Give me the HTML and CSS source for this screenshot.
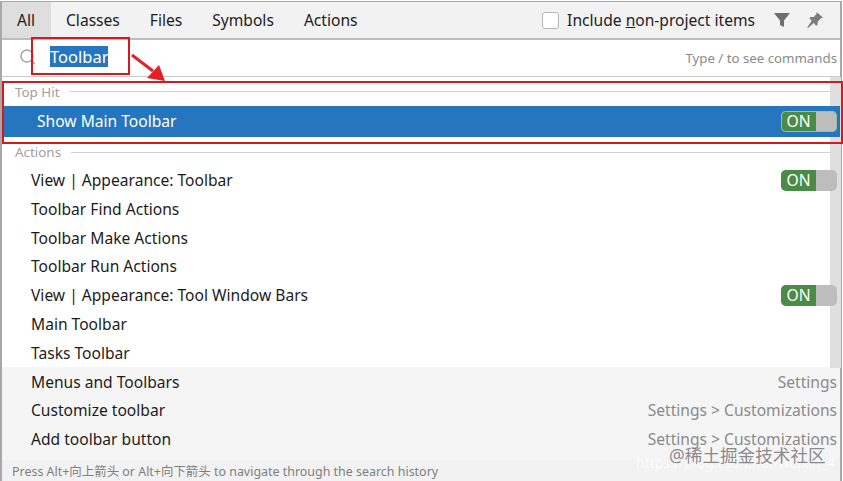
FILE: index.html
```html
<!DOCTYPE html>
<html lang="en">
<head>
<meta charset="utf-8">
<title>Search Everywhere</title>
<link rel="stylesheet" href="styles.css">
</head>
<body>
<div class="popup">
  <div class="tabs">
    <div class="tab active">All</div>
    <div class="tab">Classes</div>
    <div class="tab">Files</div>
    <div class="tab">Symbols</div>
    <div class="tab">Actions</div>
    <label class="include"><span class="check"></span><span>Include <u>n</u>on-project items</span></label>
    <svg class="tool filter" width="16" height="16" viewBox="0 0 16 16"><path d="M0 1h16L10 8.500V15L6 13V8.500z" fill="#6e6e6e"/></svg>
    <svg class="tool pin" width="18" height="18" viewBox="0 0 18 18"><path d="M10.500 1l6.500 5.500-2 .8-3.300 3.400-.2 3.300-1.300.8-2.500-2.700L2 17l-.8-.6 4.500-6.600L3.400 7.200l1-1.200 3.300-.1 2.800-2.900z" fill="#7d7d7d"/></svg>
  </div>
  <div class="search">
    <svg class="lens" width="18" height="18" viewBox="0 0 18 18"><circle cx="8" cy="8" r="6" fill="none" stroke="#a6a6a6" stroke-width="1.500"/><path d="M12.500 12.500L16 16" stroke="#a6a6a6" stroke-width="1.500"/></svg>
    <span class="query">Toolbar</span>
    <span class="hint">Type / to see commands</span>
  </div>
  <div class="results">
    <div class="group top"><span>Top Hit</span><i></i></div>
    <div class="row selected"><span class="name">Show Main Toolbar</span><span class="toggle"><b>ON</b></span></div>
    <div class="group actions"><span>Actions</span><i></i></div>
    <div class="row"><span class="name">View | Appearance: Toolbar</span><span class="toggle"><b>ON</b></span></div>
    <div class="row"><span class="name">Toolbar Find Actions</span></div>
    <div class="row"><span class="name">Toolbar Make Actions</span></div>
    <div class="row"><span class="name">Toolbar Run Actions</span></div>
    <div class="row"><span class="name">View | Appearance: Tool Window Bars</span><span class="toggle"><b>ON</b></span></div>
    <div class="row"><span class="name">Main Toolbar</span></div>
    <div class="row"><span class="name">Tasks Toolbar</span></div>
    <div class="settings">
      <div class="row"><span class="name">Menus and Toolbars</span><span class="path">Settings</span></div>
      <div class="row"><span class="name">Customize toolbar</span><span class="path">Settings &gt; Customizations</span></div>
      <div class="row"><span class="name">Add toolbar button</span><span class="path">Settings &gt; Customizations</span></div>
    </div>
  </div>
  <div class="footer">Press Alt+向上箭头 or Alt+向下箭头 to navigate through the search history</div>
  <div class="scrollbar"></div>
</div>
<div class="mark box-query"></div>
<div class="mark box-hit"></div>
<svg class="arrow" width="48" height="36" viewBox="0 0 48 36"><path d="M1 1L22 17" stroke="#e0202a" stroke-width="3"/><path d="M34 27L16 24L28 11z" fill="#e0202a"/></svg>
<div class="watermark"><span class="wm-url">https://blog.csdn.net/weixin_4</span><span class="wm-cn">@稀土掘金技术社区</span></div>
</body>
</html>
```
FILE: styles.css
```css
* { box-sizing: border-box; }
html, body { margin: 0; padding: 0; }
body {
  width: 843px;
  height: 481px;
  overflow: hidden;
  background: #fff;
  font-family: "Noto Sans", "Noto Sans CJK SC", sans-serif;
  color: #1c1c1c;
  position: relative;
}
.popup {
  width: 842px;
  height: 480px;
  margin-top: 1px;
  border: solid #a8a8a8;
  border-width: 1px 2px 0 2px;
  display: flex;
  flex-direction: column;
  position: relative;
}
.tabs {
  height: 38px;
  flex: none;
  display: flex;
  align-items: stretch;
  background: #f2f2f2;
  border-bottom: 2px solid #bdbdbd;
  font-size: 15.6px;
}
.tab { display: flex; align-items: center; padding: 0 15px; }
.tab.active { background: #dedede; width: 49px; }
.include { margin-left: auto; display: flex; align-items: center; gap: 8px; color: #222; }
.check {
  width: 17px; height: 17px;
  background: #fff;
  border: 1px solid #b5b5b5;
  border-radius: 3px;
}
.tool { align-self: center; flex: none; }
.filter { margin-left: 19px; }
.pin { margin: 0 16px 0 16px; }
.search {
  height: 37px;
  flex: none;
  display: flex;
  align-items: center;
  padding-left: 17px;
  padding-right: 3px;
  border-bottom: 1px solid #cbcbcb;
}
.lens { flex: none; margin-bottom: 2px; }
.query {
  margin-left: 13px;
  margin-bottom: 4px;
  background: #2675bf;
  color: #fff;
  font-size: 16.5px;
  line-height: 21px;
  height: 21px;
}
.hint { margin-left: auto; font-size: 13.25px; color: #8a8a8a; }
.results { flex: 1; display: flex; flex-direction: column; }
.group {
  display: flex;
  align-items: center;
  padding-left: 13px;
  padding-right: 9px;
  font-size: 13.4px;
  color: #a0a0a0;
  gap: 10px;
}
.group i { flex: 1; height: 1px; background: #cfcfcf; }
.group.top { height: 29px; }
.group.actions { height: 30px; }
.row {
  height: 28.8px;
  flex: none;
  display: flex;
  align-items: center;
  justify-content: space-between;
  padding-left: 29px;
  padding-right: 3px;
  font-size: 15.6px;
}
.row.selected {
  height: 31px;
  background: #2675bf;
  color: #fff;
  padding-left: 35px;
  position: relative;
  z-index: 1;
}
.selected .name { margin-bottom: 2px; }
.group.actions + .row { margin-top: -1.4px; }
.toggle {
  width: 56px;
  height: 21px;
  flex: none;
  display: block;
  background: #bdbdbd;
  border-radius: 5px;
  overflow: hidden;
  position: relative;
  z-index: 1;
}
.selected .toggle { outline: 1px solid #9dbd9d; outline-offset: -1px; }
.toggle b {
  display: block;
  width: 35px;
  height: 100%;
  background: #4c8b47;
  color: #fff;
  font-weight: 400;
  font-size: 15.6px;
  line-height: 21px;
  text-align: center;
}
.settings { background: #f5f5f5; flex: 1; }
.path { color: #8a8a8a; font-size: 15.6px; }
.footer {
  height: 21px;
  flex: none;
  display: flex;
  align-items: center;
  padding-left: 10px;
  background: #f2f2f2;
  font-size: 12.45px;
  color: #7f7f7f;
}
.scrollbar {
  position: absolute;
  left: 828px;
  top: 75px;
  width: 11px;
  height: 291px;
  background: #dfdfdf;
}
.mark { position: absolute; border: 2px solid #d6181f; z-index: 2; }
.box-query { left: 31px; top: 37px; width: 99px; height: 38px; }
.box-hit { left: 2px; top: 81px; width: 841px; height: 63px; }
.arrow { position: absolute; left: 131px; top: 54px; z-index: 2; }
.watermark { position: absolute; left: 636px; top: 444px; width: 200px; height: 30px; }
.wm-url { position: absolute; left: 0; top: 9px; font-size: 14px; color: rgba(255,255,255,.75); white-space: nowrap; }
.wm-cn { position: absolute; left: 33px; top: -2px; font-size: 17.6px; color: rgba(110,110,110,.8); white-space: nowrap; }
```
